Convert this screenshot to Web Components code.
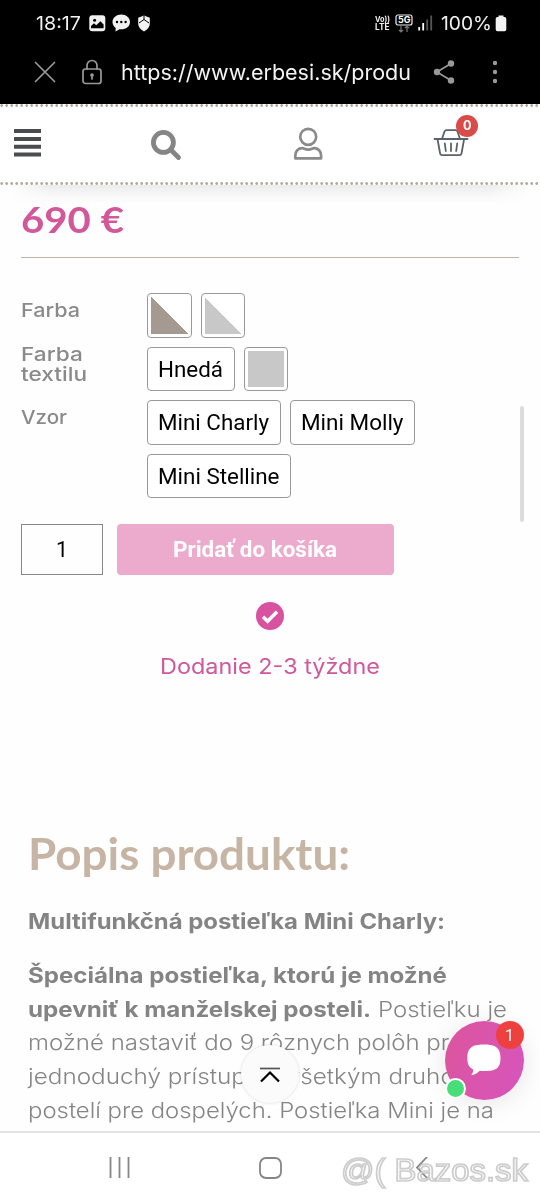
<!DOCTYPE html>
<html lang="sk">
<head>
<meta charset="utf-8">
<title>erbesi.sk</title>
<style>
html,body{margin:0;padding:0;background:#fff}
body{width:540px;height:1200px;overflow:hidden;font-family:Inter,"Open Sans",sans-serif}
</style>
</head>
<body>
<phone-screen></phone-screen>
<script>
const define=(name,html,Base=HTMLElement)=>customElements.define(name,class extends Base{
  constructor(){super();const t=document.createElement('template');t.innerHTML=html;
    this.attachShadow({mode:'open'}).append(t.content.cloneNode(true));}
});

/* Text stretched to a given advance: <fit-text w size weight line face> */
customElements.define('fit-text',class extends HTMLElement{
  constructor(){super();this.attachShadow({mode:'open'}).innerHTML=
    '<style>:host{display:block;flex:none;white-space:nowrap}span{display:inline-block;transform-origin:0 50%;white-space:pre}</style><span><slot></slot></span>';}
  connectedCallback(){
    const a=(n,d)=>this.getAttribute(n)||d, s=this.shadowRoot.querySelector('span'), w=+a('w',0);
    this.style.width=w+'px';
    this.style.height=this.style.lineHeight=a('line','24')+'px';
    this.style.fontSize=a('size','16')+'px';
    this.style.fontWeight=a('weight','400');
    if(this.hasAttribute('face'))this.style.fontFamily=a('face')+',sans-serif';
    const n=s.getBoundingClientRect().width;
    if(n)s.style.transform='scaleX('+w/n+')';
  }
});

define('status-bar',`<style>
:host{display:flex;height:46px;background:#000;color:#f2f2f2;align-items:center;padding:0 33px 0 36px;box-sizing:border-box}
svg{display:block;flex:none}.sp{flex:1}
.lte{display:flex;flex-direction:column;margin-right:5px}
</style>
<fit-text w="45" size="18.5" line="22">18:17</fit-text>
<svg style="margin-left:8px" width="17" height="17" viewBox="0 0 17 17"><rect x=".3" y=".3" width="16" height="16" rx="3" fill="#f2f2f2"/><circle cx="5.6" cy="5.3" r="1.5" fill="#000"/><path d="M2 13.2V11l3-2.7 2.2 2 4.2-4 3.2 3.2v3.7z" fill="#000"/></svg>
<svg style="margin-left:6px" width="19" height="18" viewBox="0 0 19 18"><path d="M9.3.5C4.400.5.5 3.800.5 8c0 2.500 1.200 4.500 3.200 5.900L3.500 17.500l4-2.200c6.200.6 10.500-2.800 10.500-7.300C18 3.800 14.200.5 9.300.5z" fill="#f2f2f2"/><circle cx="5" cy="8" r="1.200"/><circle cx="9.300" cy="8" r="1.200"/><circle cx="13.600" cy="8" r="1.200"/></svg>
<svg style="margin-left:6px" width="14" height="17" viewBox="0 0 14 17"><path d="M7 .5 12.800 2.800v5.700c0 3.600-2.800 6.500-5.800 8-3-1.500-5.800-4.400-5.800-8V2.800z" fill="#f2f2f2"/><path d="M7 .5v4L2 8M7 4.500 12 8" fill="none" stroke="#000" stroke-width="1"/></svg>
<div class="sp"></div>
<div class="lte"><fit-text w="15" size="8" weight="700" line="8.500">Vo))</fit-text><fit-text w="14.500" size="8.500" weight="700" line="8.500">LTE</fit-text></div>
<svg width="18" height="19" viewBox="0 0 18 19"><rect x="1" y="1" width="16" height="10" rx="2" fill="none" stroke="#eee" stroke-width="1.200"/><text x="3" y="9.300" font-family="Inter,sans-serif" font-weight="700" font-size="9" fill="#fff" textLength="12.500" lengthAdjust="spacingAndGlyphs">5G</text><path d="M6 12v6M3.800 15.800 6 18l2.200-2.200M12 18v-6M9.800 14.200 12 12l2.200 2.200" fill="none" stroke="#777" stroke-width="1.200"/></svg>
<svg style="margin-left:5px" width="15" height="16" viewBox="0 0 15 16"><path d="M1.200 12v3.500M5.200 8v7.500" stroke="#fff" stroke-width="1.800"/><path d="M9.200 4.500v11M13.200 .5v15" stroke="#555" stroke-width="1.800"/></svg>
<fit-text style="margin-left:8px;position:relative;top:.6px" w="51" size="19" line="22">100%</fit-text>
<svg style="margin-left:3px" width="12" height="17" viewBox="0 0 12 17"><path d="M3.500.500h5v1.500H9.500a1.800 1.800 0 0 1 1.800 1.800v10.700a1.800 1.800 0 0 1-1.800 1.800h-7a1.800 1.800 0 0 1-1.800-1.800V3.800A1.800 1.800 0 0 1 2.500 2h1z" fill="#f2f2f2"/></svg>`);

define('address-bar',`<style>
:host{display:flex;height:58px;background:#000;color:#f4f4f4;align-items:center;padding:0 34px 6px 34px;box-sizing:border-box}
svg{display:block;flex:none;fill:none;stroke:#999;stroke-width:1.700;stroke-linecap:round}
</style>
<svg width="22" height="22" viewBox="0 0 22 22"><path d="M1.500 1.500l19 19M20.500 1.500l-19 19"/></svg>
<svg style="margin-left:26px" width="20" height="26" viewBox="0 0 20 26"><rect x="1" y="10" width="18" height="14.500" rx="2.500"/><path d="M5 10V6.500a5 5 0 0 1 10 0V10"/><circle cx="10" cy="16" r="1" fill="#999"/><path d="M10 16v4"/></svg>
<fit-text style="margin-left:19px" w="290" size="21" line="27">https://www.erbesi.sk/produ</fit-text>
<svg style="margin-left:22px" width="22" height="24" viewBox="0 0 22 24"><path d="M18 3.500 4 12l14 8.500"/><g fill="#999" stroke="none"><circle cx="18" cy="3.500" r="3.200"/><circle cx="4" cy="12" r="3.200"/><circle cx="18" cy="20.500" r="3.200"/></g></svg>
<svg style="margin-left:37px" width="6" height="24" viewBox="0 0 6 24"><g fill="#999" stroke="none"><circle cx="3" cy="3" r="2.200"/><circle cx="3" cy="12" r="2.200"/><circle cx="3" cy="21" r="2.200"/></g></svg>`);

define('shop-header',`<style>
:host{display:flex;flex-direction:column;height:81px;background:#fff;position:relative;z-index:1}
:host::after{content:"";position:absolute;left:0;right:0;top:81px;height:20px;pointer-events:none;background:linear-gradient(rgba(0,0,0,.075),rgba(0,0,0,.025) 50%,transparent);-webkit-mask:linear-gradient(90deg,transparent 10px,#000 50px,#000 490px,transparent 530px);mask:linear-gradient(90deg,transparent 10px,#000 50px,#000 490px,transparent 530px)}
.dots{height:3px;flex:none;background:radial-gradient(circle at 1.700px 1.500px,#b5a99c 1px,transparent 1.700px) 0 0/5px 3px repeat-x #fff}
.dots.b{position:relative;top:-.5px}
nav{flex:1;display:grid;grid-template-columns:135px 142px 142px 1fr;background:#fff;align-items:start}
svg{display:block}
.cart{position:relative}
.n{position:absolute;left:36.500px;top:7.500px;width:22.500px;height:22.500px;border-radius:50%;background:#d84b49;color:#fff;display:flex;align-items:center;justify-content:center}
</style>
<div class="dots"></div>
<nav>
<svg style="margin:22px 0 0 14px" width="27" height="28"><path d="M0 2h27M0 9.900h27M0 17.700h27M0 25.500h27" stroke="#4b4c50" stroke-width="4"/></svg>
<svg style="margin:22px 0 0 15px" width="33" height="33" viewBox="0 0 33 33"><circle cx="13.400" cy="13.400" r="10" fill="none" stroke="#858585" stroke-width="4.800"/><path d="M20.500 20.500l8 8" stroke="#858585" stroke-width="4.800" stroke-linecap="round"/></svg>
<svg style="margin:19.500px 0 0 16px" width="31" height="34" viewBox="0 0 31 34"><g fill="none" stroke="#8b8b8b" stroke-width="2.700"><circle cx="15.200" cy="9.800" r="8"/><path d="M2.300 31.300h25.800v-2.800c0-4.300-3-7.300-6.900-7.300-1.900 0-2.700 1.500-6 1.500s-4.100-1.500-6-1.500c-3.900 0-6.900 3-6.900 7.300z" stroke-linejoin="round"/></g></svg>
<div class="cart">
<svg style="margin:20px 0 0 14px" width="36" height="32" viewBox="0 0 36 32"><g fill="none" stroke="#5c6269" stroke-width="1.800" stroke-linecap="round" stroke-linejoin="round"><path d="M1.500 12h33M4.500 12l2.500 14c.2 1.500 1 2.200 2.300 2.200h17c1.300 0 2.100-.7 2.300-2.200l2.500-14M9 12l2.300-7c.5-1.300 1-1.900 2.300-1.900h8.800c1.300 0 1.800.6 2.300 1.900l2.300 7M11.800 16.500l1 7.500M18 16.500V24M24.200 16.500l-1 7.500"/></g></svg>
<div class="n"><fit-text w="8.500" size="12.500" weight="700" line="20">0</fit-text></div>
</div>
</nav>
<div class="dots b"></div>`);

define('option-row',`<style>
:host{display:grid;grid-template-columns:126px 300px}
.l{color:#8a8a8a}
.v{display:flex;flex-wrap:wrap;gap:9px;align-content:start}
</style><div class="l"><slot name="label"></slot></div><div class="v"><slot></slot></div>`);

define('option-pill',`<style>
:host{display:flex;box-sizing:border-box;height:44.500px;border:1px solid #999;border-radius:4px;color:#000;align-items:center;padding:1.500px 10.500px 0 10px;background:#fff}
</style><slot></slot>`);

define('colour-swatch',`<style>
:host{display:block;box-sizing:border-box;width:44.500px;height:44.500px;border:1px solid #999;border-radius:4px;padding:3px;background:#fff}
div{width:100%;height:100%;background:var(--fill)}
</style><div></div>`);

define('product-form',`<style>
:host{display:flex;flex-direction:column;padding:14px 21px 0;box-sizing:border-box;height:635px}
.price{color:#d2589a;position:relative;top:-1px}
hr{border:0;height:1px;background:#c0b4a2;margin:14px 0 35px;flex:none}
.rows{display:flex;flex-direction:column;gap:9px}
.buy{display:flex;gap:14px;margin-top:26px;height:50.500px}
.qty{box-sizing:border-box;width:82px;border:1px solid #888;display:flex;align-items:center;justify-content:center;color:#000;padding-top:1.500px}
.add{box-sizing:border-box;width:277px;background:#ecaacd;border-radius:4px;color:#fff;display:flex;align-items:center;justify-content:center;padding:1.500px 1px 0 0}
.ship{display:flex;flex-direction:column;align-items:center;margin-top:27px;color:#d0589c}
.ship svg{display:block;margin-bottom:24px}
</style>
<fit-text class="price" w="103" size="35.500" weight="700" line="44" face="Lato">690 €</fit-text>
<hr>
<div class="rows">
<option-row><div slot="label"><fit-text style="margin-top:5px" w="59" size="19.300" weight="500" line="25">Farba</fit-text></div>
<colour-swatch style="--fill:linear-gradient(45deg,#a49a92 50%,#fff 50.500%)"></colour-swatch><colour-swatch style="--fill:linear-gradient(45deg,#c8c8c8 50%,#fff 50.500%)"></colour-swatch></option-row>
<option-row><div slot="label"><fit-text style="margin-top:-3px" w="66" size="19.300" weight="500" line="20">Farba
textilu</fit-text></div>
<option-pill><fit-text w="65" size="22" line="26" face="Roboto">Hnedá</fit-text></option-pill><colour-swatch style="--fill:#c8c8c8"></colour-swatch></option-row>
<option-row><div slot="label"><fit-text style="margin-top:4.500px" w="46" size="19.300" weight="500" line="25">Vzor</fit-text></div>
<option-pill><fit-text w="111" size="22" line="26" face="Roboto">Mini Charly</fit-text></option-pill><option-pill><fit-text w="102.500" size="22" line="26" face="Roboto">Mini Molly</fit-text></option-pill><option-pill><fit-text w="121.500" size="22" line="26" face="Roboto">Mini Stelline</fit-text></option-pill></option-row>
</div>
<div class="buy"><div class="qty"><fit-text w="12" size="22" line="26" face="Roboto">1</fit-text></div><div class="add"><fit-text w="164" size="22" weight="700" line="26" face="Roboto">Pridať do košíka</fit-text></div></div>
<div class="ship">
<svg width="28" height="28" viewBox="0 0 28 28"><circle cx="14" cy="14" r="14" fill="#d8529f"/><path d="M7 14.800l4.600 4.400 9.400-9.400" fill="none" stroke="#fff" stroke-width="3.500"/></svg>
<fit-text w="220" size="21" line="26">Dodanie 2-3 týždne</fit-text></div>`);

define('product-description',`<style>
:host{display:block;padding:10px 28px 0;height:311px;box-sizing:border-box;overflow:hidden;color:#858585}
.h{color:#c6b5a4}.b{color:#848484}
.row{display:flex;gap:7px}
</style>
<fit-text class="h" w="322" size="43" weight="700" line="48" face="Lato">Popis produktu:</fit-text>
<fit-text class="b" style="margin-top:26px" w="417" size="21.500" weight="700" line="34">Multifunkčná postieľka Mini Charly:</fit-text>
<fit-text class="b" style="margin-top:20px" w="419" size="21.500" weight="700" line="34">Špeciálna postieľka, ktorú je možné</fit-text>
<div class="row"><fit-text class="b" w="343" size="21.500" weight="700" line="34">upevniť k manželskej posteli.</fit-text><fit-text w="129" size="21.500" weight="300" line="34">Postieľku je</fit-text></div>
<fit-text w="435" size="21.500" weight="300" line="33">možné nastaviť do 9 rôznych polôh pre</fit-text>
<fit-text w="448" size="21.500" weight="300" line="34">jednoduchý prístup ku všetkým druhom</fit-text>
<fit-text w="466" size="21.500" weight="300" line="34">postelí pre dospelých. Postieľka Mini je na</fit-text>`);

define('system-nav',`<style>
:host{display:flex;height:69px;box-sizing:border-box;border-top:2px solid #e4e4e4;background:#fff;padding:24px 0 0 109px}
svg{display:block;flex:none;fill:none;stroke:#858585;stroke-width:1.800}
</style>
<svg width="22" height="22"><path d="M1.500 0v21M10.500 0v21M19.500 0v21"/></svg>
<svg style="margin-left:128px" width="24" height="22"><rect x="1" y="1" width="21" height="20" rx="6"/></svg>
<svg style="margin-left:132px" width="14" height="22"><path d="M12 0L2 10.500 12 21"/></svg>`);

define('top-button',`<style>
:host{position:absolute;left:241px;top:1044.500px;width:58px;height:58px;border-radius:50%;background:#fbfbfb;box-shadow:0 0 3px rgba(0,0,0,.16)}
svg{display:block;margin:22px 0 0 19px}
</style><svg width="20" height="16" viewBox="0 0 20 16"><path d="M0 1.500h20" stroke="#555" stroke-width="1.700"/><path d="M1 14.500l9-9 9 9" fill="none" stroke="#000" stroke-width="2.200"/></svg>`);

define('chat-button',`<style>
:host{position:absolute;left:444.500px;top:1020.500px;width:79px;height:79px;border-radius:50%;background:linear-gradient(110deg,#dd559d,#d655bd);box-shadow:0 3px 26px rgba(0,0,0,.1)}
.ic{position:absolute;left:22px;top:23px}
.n{position:absolute;left:51px;top:0;width:28px;height:28px;border-radius:50%;background:#ef4040;color:#fff;display:flex;align-items:center;justify-content:center}
.on{position:absolute;left:0;top:57px;width:17px;height:17px;border:2.500px solid #fff;border-radius:50%;background:#48dd78}
</style>
<svg class="ic" width="34" height="32" viewBox="0 0 34 32"><path d="M17 .5C26 .5 33.500 2 33.500 14S27 27 17 27c-1.500 0-3-.1-4.200-.3-1.800 1.800-4.700 3.800-7.800 4.500-.6 0-.7-.5-.3-.9 1-1.300 1.600-3 1.500-4.900C2 23.500.3 20 .3 14 .3 2 8 .5 17 .5z" fill="#fff"/></svg>
<div class="n"><fit-text w="9" size="17" line="22" face="Roboto">1</fit-text></div><div class="on"></div>`);

define('water-mark',`<style>
:host{position:absolute;left:341px;top:1150px;color:rgba(255,255,255,.7);-webkit-text-stroke:1.700px rgba(170,170,170,.6)}
</style><fit-text w="187" size="32" line="41" face="Liberation Sans">@( Bazos.sk</fit-text>`);

define('phone-screen',`<style>
:host{display:flex;flex-direction:column;position:relative;width:540px;height:1200px;overflow:hidden;background:#fefefe}
.scroll{position:absolute;left:520px;top:406px;width:4px;height:115.500px;border-radius:2px;background:#dcdcdc}
</style>
<status-bar></status-bar><address-bar></address-bar><shop-header></shop-header>
<product-form></product-form><product-description></product-description><system-nav></system-nav>
<div class="scroll"></div><top-button></top-button><chat-button></chat-button><water-mark></water-mark>`);
</script>
</body>
</html>
